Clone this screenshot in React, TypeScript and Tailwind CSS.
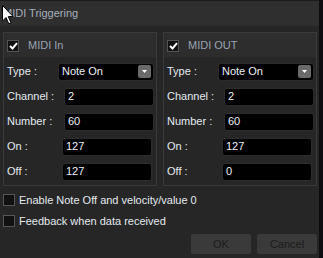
import React from "react";

const font = { fontFamily: '"Liberation Sans", Arial, sans-serif' };

function Check({ checked }: { checked?: boolean }) {
  return (
    <div className="w-[12px] h-[12px] bg-[#111] border border-[#555] flex items-center justify-center shrink-0">
      {checked && (
        <svg width="9" height="8" viewBox="0 0 9 8">
          <path d="M1 4 L3.5 6.5 L8 1.2" stroke="#fff" strokeWidth="2" fill="none" />
        </svg>
      )}
    </div>
  );
}

function Field({ label, value, ml }: { label: string; value: string; ml: string }) {
  return (
    <div className="flex items-center h-[17px]">
      <span className="text-[#e4eaf0] whitespace-nowrap w-0">{label}</span>
      <div
        className={`${ml} w-[90px] h-[18px] bg-black rounded-[3px] border border-[#2c2c2c] flex items-center px-[3px] text-[#eef2f6]`}
      >
        {value}
      </div>
    </div>
  );
}

function Group({ title, values }: { title: string; values: string[] }) {
  return (
    <div className="w-[154px] h-[154px] border border-[#3a3a3a] flex flex-col">
      <div className="h-[24px] bg-[#2d2d2d] flex items-center gap-[9px] pl-[3px] pt-[1px]">
        <Check checked />
        <span className="text-[#9aa4b4]">{title}</span>
      </div>
      <div className="flex flex-col gap-[8px] pl-[3px] pt-[6px]">
        <div className="flex items-center h-[17px]">
          <span className="text-[#e4eaf0] whitespace-nowrap w-0">Type :</span>
          <div className="ml-[51px] w-[96px] h-[18px] bg-black rounded-[3px] border border-[#2c2c2c] flex items-center justify-between pl-[3px] pr-[2px] text-[#eef2f6]">
            <span>Note On</span>
            <div className="w-[13px] h-[13px] bg-[#6a6a6a] rounded-[2px] flex items-center justify-center">
              <svg width="5" height="3" viewBox="0 0 5 3">
                <path d="M0 0 H5 L2.5 3 Z" fill="#fff" />
              </svg>
            </div>
          </div>
        </div>
        <Field label="Channel :" value={values[0]} ml="ml-[57px]" />
        <Field label="Number :" value={values[1]} ml="ml-[57px]" />
        <Field label="On :" value={values[2]} ml="ml-[55px]" />
        <Field label="Off :" value={values[3]} ml="ml-[55px]" />
      </div>
    </div>
  );
}

export default function App() {
  return (
    <div className="w-[323px] h-[258px] bg-[#1e1a2e] flex text-[11px] leading-none" style={font}>
      <div className="w-[319px] h-full flex flex-col bg-[#262626] relative">
        <div className="h-[26px] bg-[#2f2f2f] flex items-center pl-[3px] text-[#a6aebb] border-t border-[#1a1a1a]">
          MIDI Triggering
        </div>
        <div className="flex gap-[6px] pl-[3px] pt-[6px]">
          <Group title="MIDI In" values={["2", "60", "127", "127"]} />
          <Group title="MIDI OUT" values={["2", "60", "127", "0"]} />
        </div>
        <div className="flex flex-col gap-[9px] pl-[3px] pt-[8px]">
          <div className="flex items-center gap-[4px]">
            <Check />
            <span className="text-[#e4eaf0]">Enable Note Off and velocity/value 0</span>
          </div>
          <div className="flex items-center gap-[4px]">
            <Check />
            <span className="text-[#e4eaf0]">Feedback when data received</span>
          </div>
        </div>
        <div className="flex justify-end gap-[6px] pr-[2px] pt-[7px]">
          <div className="w-[60px] h-[20px] bg-[#3a3a3a] rounded-[2px] flex items-center justify-center text-[#1c1c1c]">
            OK
          </div>
          <div className="w-[60px] h-[20px] bg-[#3a3a3a] rounded-[2px] flex items-center justify-center text-[#1c1c1c]">
            Cancel
          </div>
        </div>
        <svg className="absolute left-[2px] top-[5px]" width="13" height="20" viewBox="0 0 13 20">
          <path d="M0.5 0.5 V16 L4 12.5 L6.8 18.8 L9 17.8 L6.3 11.6 H11.2 Z" fill="#fff" stroke="#000" strokeWidth="1" />
        </svg>
      </div>
      <div className="w-[4px] h-full bg-[#0e0e12]" />
    </div>
  );
}
